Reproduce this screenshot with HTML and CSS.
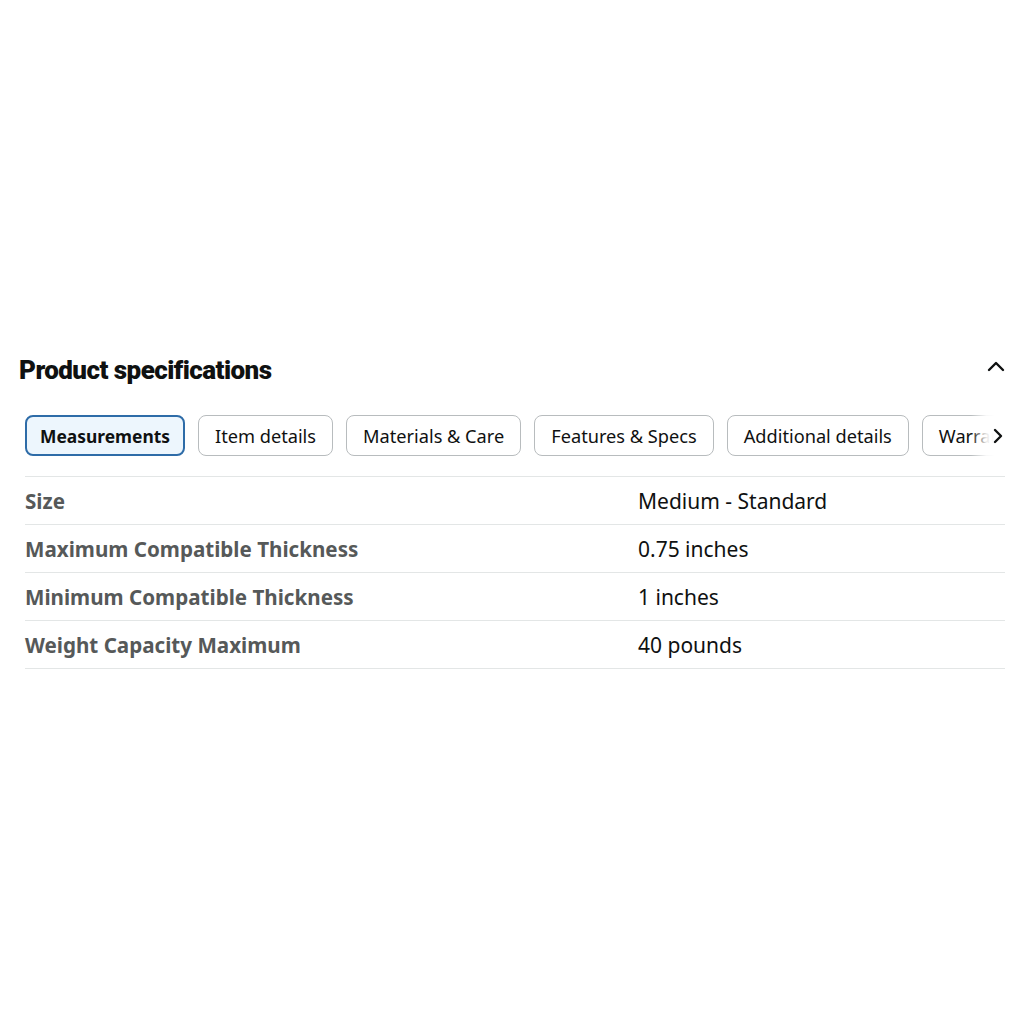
FILE: index.html
```html
<!DOCTYPE html>
<html>
<head>
<meta charset="utf-8">
<link rel="stylesheet" href="styles.css">
</head>
<body>
<section class="specs">
  <div class="header">
    <h2 class="title">Product specifications</h2>
    <svg class="collapse" width="18" height="12" viewBox="0 0 18 12"><path d="M2 10 L9 3 L16 10" fill="none" stroke="#0f1111" stroke-width="2.4" stroke-linecap="round" stroke-linejoin="round"/></svg>
  </div>
  <div class="tabs-wrap">
    <div class="tabs">
      <button class="tab active">Measurements</button>
      <button class="tab">Item details</button>
      <button class="tab">Materials &amp; Care</button>
      <button class="tab">Features &amp; Specs</button>
      <button class="tab">Additional details</button>
      <button class="tab last">Warranty</button>
    </div>
    <div class="fade">
      <svg width="12" height="16" viewBox="0 0 12 16"><path d="M3 2 L9 8 L3 14" fill="none" stroke="#0f1111" stroke-width="2.4" stroke-linecap="round" stroke-linejoin="round"/></svg>
    </div>
  </div>
  <div class="table">
    <div class="row"><div class="label">Size</div><div class="value">Medium - Standard</div></div>
    <div class="row"><div class="label">Maximum Compatible Thickness</div><div class="value">0.75 inches</div></div>
    <div class="row"><div class="label">Minimum Compatible Thickness</div><div class="value">1 inches</div></div>
    <div class="row"><div class="label">Weight Capacity Maximum</div><div class="value">40 pounds</div></div>
  </div>
</section>
</body>
</html>
```
FILE: styles.css
```css
html, body {
  margin: 0;
  padding: 0;
  background: #ffffff;
}
body {
  font-family: "Noto Sans", "Open Sans", sans-serif;
  color: #0f1111;
}
.specs {
  padding: 352px 19px 0 19px;
}
.header {
  display: flex;
  align-items: center;
  justify-content: space-between;
  height: 36px;
}
.title {
  margin: 0;
  font-family: Roboto, "Noto Sans", sans-serif;
  font-weight: 900;
  font-size: 26px;
  letter-spacing: -0.55px;
  color: #0f1111;
}
.collapse {
  margin-top: -8px;
}
.tabs-wrap {
  position: relative;
  margin-top: 26px;
  margin-left: 6px;
  overflow: hidden;
}
.tabs {
  display: flex;
  gap: 13px;
  white-space: nowrap;
  padding: 1px 0;
}
.tab {
  flex: none;
  height: 41px;
  padding: 0 16px;
  border: 1px solid #b8bcbe;
  border-radius: 8px;
  background: #ffffff;
  font-family: "Noto Sans", sans-serif;
  font-size: 18.2px;
  color: #0f1111;
}
.tab.active {
  border: 2px solid #2e6ca8;
  background: #edf6fd;
  font-weight: 700;
  font-size: 17.4px;
  padding: 0 13px;
}
.fade {
  position: absolute;
  top: 0;
  right: 0;
  width: 34px;
  height: 43px;
  display: flex;
  align-items: center;
  justify-content: flex-end;
  background: linear-gradient(to right, rgba(255,255,255,0) 0%, rgba(255,255,255,0.9) 45%, #fff 70%);
}
.fade svg {
  margin-right: 1px;
}
.table {
  margin: 19px 0 0 6px;
  border-top: 1px solid #e3e6e6;
}
.row {
  display: grid;
  grid-template-columns: 613px 1fr;
  align-items: center;
  height: 47px;
  border-bottom: 1px solid #e3e6e6;
}
.label {
  font-weight: 700;
  font-size: 20.6px;
  color: #565959;
}
.value {
  font-size: 21px;
  color: #0f1111;
}
```
